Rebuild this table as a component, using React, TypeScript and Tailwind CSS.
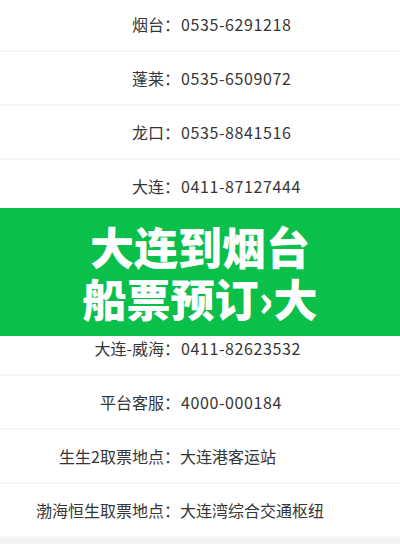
import React from 'react';

const rows: [string, string][] = [
  ['烟台：', '0535-6291218'],
  ['蓬莱：', '0535-6509072'],
  ['龙口：', '0535-8841516'],
  ['大连：', '0411-87127444'],
  ['', ''],
  ['', ''],
  ['大连-威海：', '0411-82623532'],
  ['平台客服：', '4000-000184'],
  ['生生2取票地点：', '大连港客运站'],
  ['渤海恒生取票地点：', '大连湾综合交通枢纽'],
];

const App: React.FC = () => {
  return (
    <div
      className="relative w-[400px] h-[544px] overflow-hidden bg-white text-[#363636]"
      style={{ fontFamily: '"Noto Sans CJK SC", "Noto Sans", sans-serif' }}
    >
      <div className="-mt-[2px] flex flex-col">
        {rows.map(([label, value], i) => (
          <div key={i} className="flex h-[54px] items-center border-b-2 border-[#f6f6f6] text-[16px]">
            <span className="w-[180px] shrink-0 text-right">{label}</span>
            <span className={/^[0-9-]+$/.test(value) ? 'pl-[1px] tracking-[0.6px]' : ''}>{value}</span>
          </div>
        ))}
        <div className="h-[10px] bg-[#f2f2f2]" />
      </div>

      {/* banner laid over the list */}
      <div className="absolute left-0 top-[208px] flex h-[128px] w-full flex-col items-center justify-center bg-[#0bbf4b] text-white">
        <div className="text-[44px] font-black leading-[52px] whitespace-nowrap">大连到烟台</div>
        <div className="text-[44px] font-black leading-[52px] whitespace-nowrap">船票预订›大</div>
      </div>
    </div>
  );
};

export default App;
